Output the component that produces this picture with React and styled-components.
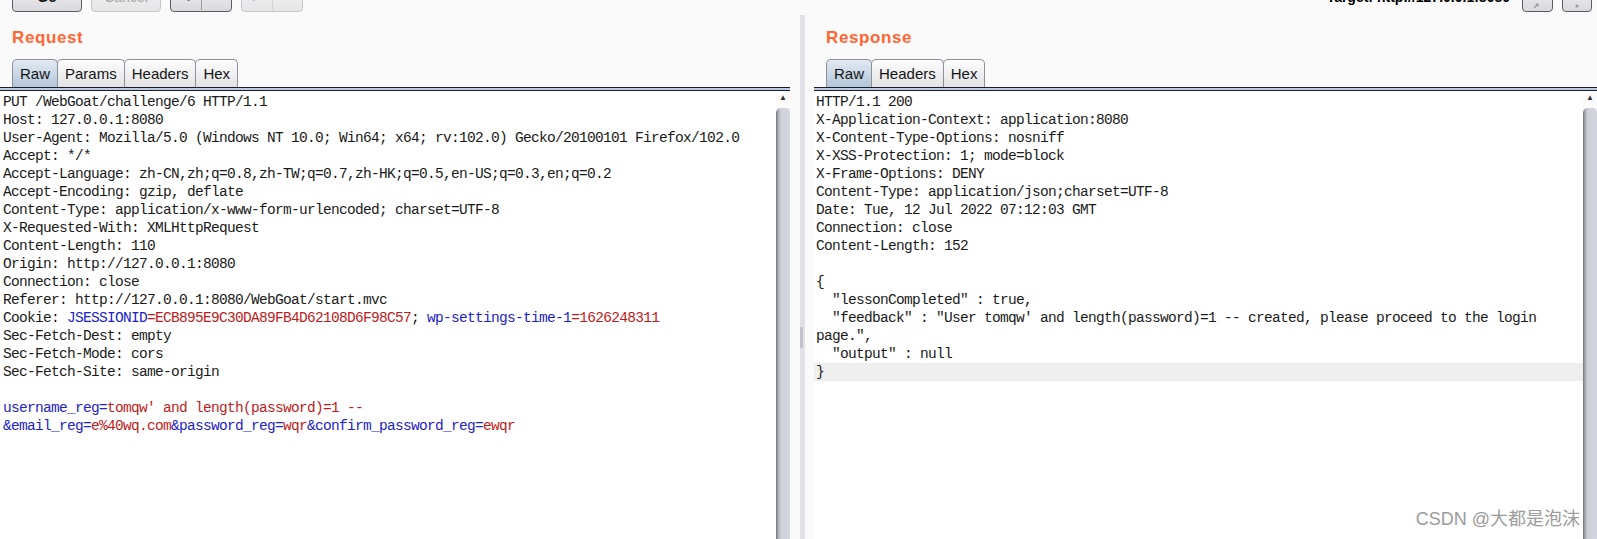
import React from 'react';
import styled, { createGlobalStyle } from 'styled-components';

const GlobalStyle = createGlobalStyle`
  html, body { margin: 0; padding: 0; background: #fafafa; }
  body { width: 1597px; height: 539px; overflow: hidden; font-family: "Liberation Sans", Arial, sans-serif; }
  * { box-sizing: border-box; }
`;

const Page = styled.div`
  position: relative;
  width: 1597px;
  height: 539px;
  display: flex;
  flex-direction: column;
  background: #fafafa;
  overflow: hidden;
`;

const Toolbar = styled.div`
  height: 12px;
  flex: none;
  display: flex;
  align-items: flex-end;
  gap: 9px;
  padding: 0 5px 0 12px;
  overflow: hidden;
`;

const ToolButton = styled.div`
  width: ${p => p.$w}px;
  height: 30px;
  flex: none;
  display: flex;
  align-items: center;
  justify-content: center;
  border: 1px solid ${p => (p.$off ? '#c6c6ca' : '#5c5c60')};
  border-radius: 4px;
  background: ${p => (p.$off ? 'linear-gradient(#f2f2f2, #e6e6e8)' : 'linear-gradient(#f6f6f6, #d9d9de)')};
  color: ${p => (p.$off ? '#a8a8a8' : '#111')};
  font-size: 14px;
  font-weight: ${p => (p.$bold ? 700 : 400)};
  padding-bottom: 1px;
`;

const SplitPart = styled.div`
  flex: 1;
  height: 100%;
  display: flex;
  align-items: ${p => (p.$top ? 'flex-start' : 'center')};
  justify-content: center;
  font-size: 15px;
  line-height: 16px;
`;

const SplitSep = styled.div`
  width: 1px;
  height: 100%;
  background: ${p => (p.$off ? '#d4d4d8' : '#9a9aa0')};
`;

const Spacer = styled.div`
  flex: 1;
`;

const TargetLabel = styled.div`
  font-size: 14px;
  font-weight: 700;
  line-height: 16px;
  color: #000;
  margin-bottom: 7px;
  margin-right: 3px;
`;

const IconButton = styled(ToolButton)`
  align-items: flex-end;
  padding-bottom: 2px;
`;

const Main = styled.div`
  flex: 1;
  min-height: 0;
  display: flex;
`;

const Pane = styled.div`
  width: ${p => (p.$w ? `${p.$w}px` : 'auto')};
  flex: ${p => (p.$w ? 'none' : '1')};
  display: flex;
  flex-direction: column;
  min-width: 0;
`;

const Title = styled.div`
  height: 47px;
  padding: 16px 0 0 12px;
  font-size: 17px;
  line-height: 20px;
  font-weight: 700;
  letter-spacing: 0.6px;
  color: #ff6633;
`;

const TabRow = styled.div`
  height: 28px;
  display: flex;
  align-items: flex-end;
  padding-left: 12px;
`;

const Tab = styled.div`
  height: 28px;
  padding: 0 7px;
  margin-left: -1px;
  border: 1px solid #8c9099;
  border-bottom: none;
  border-radius: 5px 5px 0 0;
  font-size: 15px;
  line-height: 27px;
  color: #141414;
  background: ${p => (p.$active ? 'linear-gradient(#e2eaf2, #b3c6d9)' : 'linear-gradient(#fdfdfd, #e3e3e7)')};
  &:first-child { margin-left: 0; }
`;

const Rule = styled.div`
  height: 4px;
  flex: none;
  border-top: 1px solid #1b1b26;
  border-bottom: 1px solid #1b1b26;
  background: #bacde0;
`;

const Editor = styled.div`
  flex: 1;
  min-height: 0;
  display: flex;
`;

const TextArea = styled.div`
  flex: 1;
  min-width: 0;
  background: #fff;
  padding-top: 2px;
  font-family: "Liberation Mono", "Courier New", monospace;
  font-size: 14.5px;
  letter-spacing: -0.7px;
  color: #1a1a1a;
  white-space: pre;
  overflow: hidden;
`;

const Line = styled.div`
  height: 18px;
  line-height: 18px;
  padding-left: ${p => p.$pad}px;
  background: ${p => (p.$hl ? '#efefef' : 'transparent')};
`;

const Name = styled.span`
  color: #1c22cc;
`;

const Val = styled.span`
  color: #c01c1c;
`;

const Scrollbar = styled.div`
  width: 14px;
  flex: none;
  display: flex;
  flex-direction: column;
  background: #f4f4f6;
`;

const ScrollUp = styled.div`
  height: 17px;
  flex: none;
  display: flex;
  justify-content: center;
  padding-top: 2px;
  background: #fbfbfb;
  font-size: 8px;
  line-height: 10px;
  color: #333;
`;

const Thumb = styled.div`
  flex: 1;
  border-radius: 5px 5px 0 0;
  background: linear-gradient(to right, #707074 0, #a9aab2 2px, #cfd1db 5px, #d3d5df 100%);
`;

const Splitter = styled.div`
  width: 24px;
  flex: none;
  padding: 3px 0 0 10px;
  display: flex;
`;

const SplitBar = styled.div`
  width: 5px;
  height: 100%;
  background: #e1e2e8;
  display: flex;
  flex-direction: column;
`;

const Grip = styled.div`
  width: 3px;
  height: 21px;
  margin-top: 312px;
  background: #c2c3ca;
`;

const Watermark = styled.div`
  position: absolute;
  right: 17px;
  bottom: 10px;
  font-family: "Liberation Sans", "Noto Sans CJK SC", sans-serif;
  font-size: 18px;
  line-height: 20px;
  color: #9c9c9c;
  text-shadow: 0 0 1px #fff;
`;

const requestLines = [
  'PUT /WebGoat/challenge/6 HTTP/1.1',
  'Host: 127.0.0.1:8080',
  'User-Agent: Mozilla/5.0 (Windows NT 10.0; Win64; x64; rv:102.0) Gecko/20100101 Firefox/102.0',
  'Accept: */*',
  'Accept-Language: zh-CN,zh;q=0.8,zh-TW;q=0.7,zh-HK;q=0.5,en-US;q=0.3,en;q=0.2',
  'Accept-Encoding: gzip, deflate',
  'Content-Type: application/x-www-form-urlencoded; charset=UTF-8',
  'X-Requested-With: XMLHttpRequest',
  'Content-Length: 110',
  'Origin: http://127.0.0.1:8080',
  'Connection: close',
  'Referer: http://127.0.0.1:8080/WebGoat/start.mvc',
  <>Cookie: <Name>JSESSIONID</Name><Val>=ECB895E9C30DA89FB4D62108D6F98C57</Val>; <Name>wp-settings-time-1</Name><Val>=1626248311</Val></>,
  'Sec-Fetch-Dest: empty',
  'Sec-Fetch-Mode: cors',
  'Sec-Fetch-Site: same-origin',
  '',
  <><Name>username_reg=</Name><Val>tomqw' and length(password)=1 --</Val></>,
  <><Name>&amp;email_reg=</Name><Val>e%40wq.com</Val><Name>&amp;password_reg=</Name><Val>wqr</Val><Name>&amp;confirm_password_reg=</Name><Val>ewqr</Val></>,
];

const responseLines = [
  'HTTP/1.1 200',
  'X-Application-Context: application:8080',
  'X-Content-Type-Options: nosniff',
  'X-XSS-Protection: 1; mode=block',
  'X-Frame-Options: DENY',
  'Content-Type: application/json;charset=UTF-8',
  'Date: Tue, 12 Jul 2022 07:12:03 GMT',
  'Connection: close',
  'Content-Length: 152',
  '',
  '{',
  '  "lessonCompleted" : true,',
  '  "feedback" : "User tomqw\' and length(password)=1 -- created, please proceed to the login',
  'page.",',
  '  "output" : null',
  '}',
];

function Scroll() {
  return (
    <Scrollbar>
      <ScrollUp>▲</ScrollUp>
      <Thumb />
    </Scrollbar>
  );
}

function MessagePane({ title, tabs, lines, pad, width, hlIndex }) {
  return (
    <Pane $w={width}>
      <Title>{title}</Title>
      <TabRow>
        {tabs.map((t, i) => (
          <Tab key={t} $active={i === 0}>{t}</Tab>
        ))}
      </TabRow>
      <Rule />
      <Editor>
        <TextArea>
          {lines.map((l, i) => (
            <Line key={i} $pad={pad} $hl={i === hlIndex}>{l === '' ? ' ' : l}</Line>
          ))}
        </TextArea>
        <Scroll />
      </Editor>
    </Pane>
  );
}

export default function App() {
  return (
    <Page>
      <GlobalStyle />
      <Toolbar>
        <ToolButton $w={70} $bold>Go</ToolButton>
        <ToolButton $w={70} $off>Cancel</ToolButton>
        <ToolButton $w={62}>
          <SplitPart>&lt;</SplitPart>
          <SplitSep />
          <SplitPart $top>▾</SplitPart>
        </ToolButton>
        <ToolButton $w={62} $off>
          <SplitPart>&gt;</SplitPart>
          <SplitSep $off />
          <SplitPart $top>▾</SplitPart>
        </ToolButton>
        <Spacer />
        <TargetLabel>Target: http://127.0.0.1:8080</TargetLabel>
        <IconButton $w={31}>
          <svg width="10" height="6" viewBox="0 0 10 6">
            <path d="M1 5 L5 1 M5 1 H2.5 M5 1 V3.5" stroke="#9a9aa0" strokeWidth="1.2" fill="none" />
          </svg>
        </IconButton>
        <IconButton $w={30}>
          <svg width="6" height="6" viewBox="0 0 6 6">
            <circle cx="3" cy="3" r="1.6" fill="#9a9aa0" />
          </svg>
        </IconButton>
      </Toolbar>
      <Main>
        <MessagePane
          title="Request"
          tabs={['Raw', 'Params', 'Headers', 'Hex']}
          lines={requestLines}
          pad={3}
          width={790}
          hlIndex={-1}
        />
        <Splitter>
          <SplitBar>
            <Grip />
          </SplitBar>
        </Splitter>
        <MessagePane
          title="Response"
          tabs={['Raw', 'Headers', 'Hex']}
          lines={responseLines}
          pad={2}
          hlIndex={15}
        />
      </Main>
      <Watermark>CSDN @大都是泡沫</Watermark>
    </Page>
  );
}
